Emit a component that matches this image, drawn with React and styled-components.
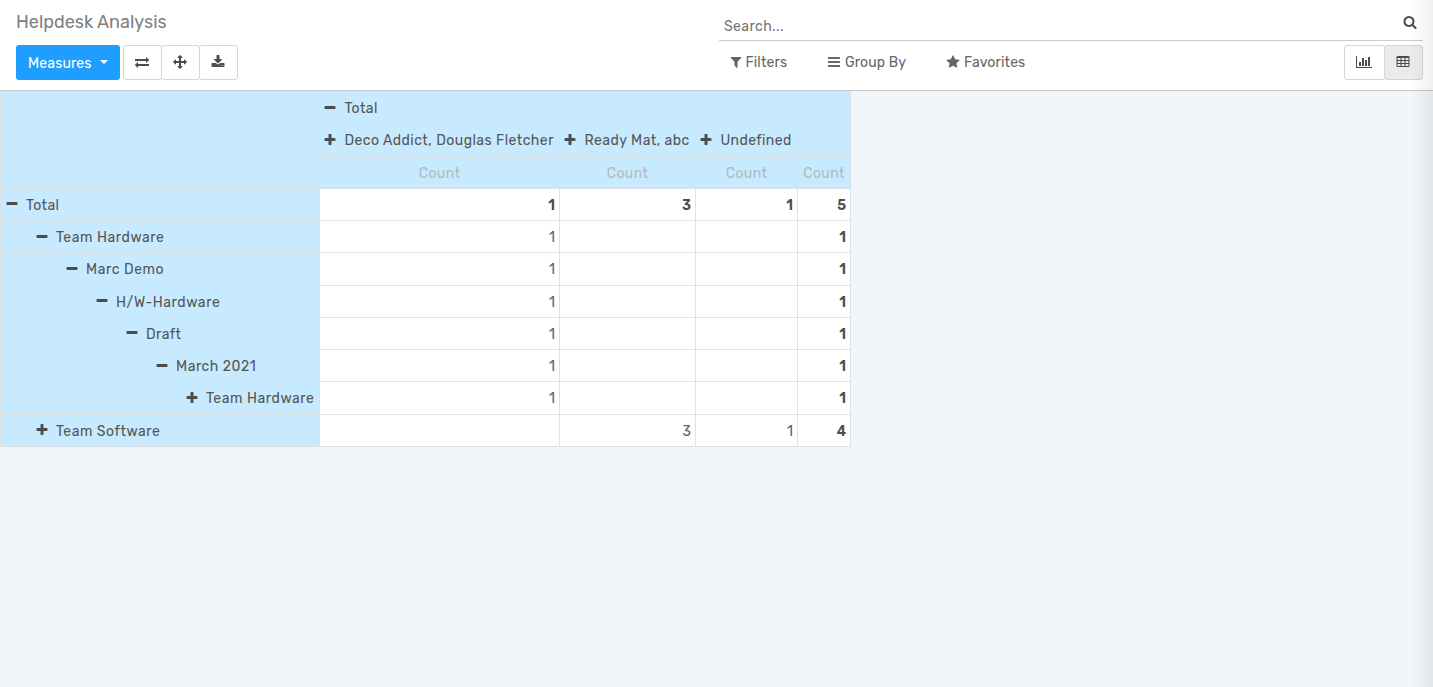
import React from "react";
import styled, { createGlobalStyle, css } from "styled-components";

const Global = createGlobalStyle`
  *, *::before, *::after { box-sizing: border-box; }
  body {
    margin: 0;
    height: 687px;
    overflow: hidden;
    background: #f1f6fb;
    color: #4c4c4c;
    font: 400 14px/21px Rubik, Roboto, "Noto Sans", sans-serif;
  }
`;

const icons = {
  exchange: "M1792 1184v192q0 13-9.5 22.5t-22.5 9.5h-1376v192q0 13-9.5 22.5t-22.5 9.5q-12 0-24-10l-319-320q-9-9-9-22 0-14 9-23l320-320q9-9 23-9 13 0 22.5 9.5t9.5 22.5v192h1376q13 0 22.5 9.5t9.5 22.5zm0-544q0 14-9 23l-320 320q-9 9-23 9-13 0-22.5-9.5t-9.5-22.5v-192h-1376q-13 0-22.5-9.5t-9.5-22.5v-192q0-13 9.5-22.5t22.5-9.5h1376v-192q0-14 9-23t23-9q12 0 24 10l319 319q9 9 9 23z",
  arrows: "M1792 896q0 26-19 45l-256 256q-19 19-45 19t-45-19-19-45v-128h-384v384h128q26 0 45 19t19 45-19 45l-256 256q-19 19-45 19t-45-19l-256-256q-19-19-19-45t19-45 45-19h128v-384h-384v128q0 26-19 45t-45 19-45-19l-256-256q-19-19-19-45t19-45l256-256q19-19 45-19t45 19 19 45v128h384v-384h-128q-26 0-45-19t-19-45 19-45l256-256q19-19 45-19t45 19l256 256q19 19 19 45t-19 45-45 19h-128v384h384v-128q0-26 19-45t45-19 45 19l256 256q19 19 19 45z",
  download: "M1344 1344q0-26-19-45t-45-19-45 19-19 45 19 45 45 19 45-19 19-45zm256 0q0-26-19-45t-45-19-45 19-19 45 19 45 45 19 45-19 19-45zm128-224v320q0 40-28 68t-68 28h-1472q-40 0-68-28t-28-68v-320q0-40 28-68t68-28h465l135 136q58 56 136 56t136-56l136-136h464q40 0 68 28t28 68zm-325-569q17 41-14 70l-448 448q-18 19-45 19t-45-19l-448-448q-31-29-14-70 17-39 59-39h256v-448q0-26 19-45t45-19h256q26 0 45 19t19 45v448h256q42 0 59 39z",
  filter: "M1595 295q17 41-14 70l-493 493v742q0 42-39 59-13 5-25 5-27 0-45-19l-256-256q-19-19-19-45v-486l-493-493q-31-29-14-70 17-39 59-39h1280q42 0 59 39z",
  bars: "M1664 1344v128q0 26-19 45t-45 19h-1408q-26 0-45-19t-19-45v-128q0-26 19-45t45-19h1408q26 0 45 19t19 45zm0-512v128q0 26-19 45t-45 19h-1408q-26 0-45-19t-19-45v-128q0-26 19-45t45-19h1408q26 0 45 19t19 45zm0-512v128q0 26-19 45t-45 19h-1408q-26 0-45-19t-19-45v-128q0-26 19-45t45-19h1408q26 0 45 19t19 45z",
  star: "M1728 647q0 22-26 48l-363 354 86 500q1 7 1 20 0 21-10.5 35.5t-30.5 14.5q-19 0-40-12l-449-236-449 236q-22 12-40 12-21 0-31.5-14.5t-10.5-35.5q0-6 2-20l86-500-364-354q-25-27-25-48 0-37 56-46l502-73 225-455q19-41 49-41t49 41l225 455 502 73q56 9 56 46z",
  search: "M1216 832q0-185-131.5-316.5t-316.5-131.5-316.5 131.5-131.5 316.5 131.5 316.5 316.5 131.5 316.5-131.5 131.5-316.5zm512 832q0 52-38 90t-90 38q-54 0-90-38l-343-342q-179 124-399 124-143 0-273.5-55.5t-225-150-150-225-55.5-273.5 55.5-273.5 150-225 225-150 273.5-55.5 273.5 55.5 225 150 150 225 55.5 273.5q0 220-124 399l343 343q37 37 37 90z",
  chart: "M640 896v512h-256v-512h256zm384-512v1024h-256v-1024h256zm1024 1152v128h-2048v-1536h128v1408h1920zm-640-896v768h-256v-768h256zm384-384v1152h-256v-1152h256z",
  table: "M224 128h1344q66 0 113 47t47 113v1088q0 66-47 113t-113 47h-1344q-66 0-113-47t-47-113v-1088q0-66 47-113t113-47zM192 416v192q0 32 32 32h320q32 0 32-32v-192q0-32-32-32h-320q-32 0-32 32zM704 416v192q0 32 32 32h320q32 0 32-32v-192q0-32-32-32h-320q-32 0-32 32zM1216 416v192q0 32 32 32h320q32 0 32-32v-192q0-32-32-32h-320q-32 0-32 32zM192 800v192q0 32 32 32h320q32 0 32-32v-192q0-32-32-32h-320q-32 0-32 32zM704 800v192q0 32 32 32h320q32 0 32-32v-192q0-32-32-32h-320q-32 0-32 32zM1216 800v192q0 32 32 32h320q32 0 32-32v-192q0-32-32-32h-320q-32 0-32 32zM192 1184v192q0 32 32 32h320q32 0 32-32v-192q0-32-32-32h-320q-32 0-32 32zM704 1184v192q0 32 32 32h320q32 0 32-32v-192q0-32-32-32h-320q-32 0-32 32zM1216 1184v192q0 32 32 32h320q32 0 32-32v-192q0-32-32-32h-320q-32 0-32 32z",
  plus: "M1600 736v192q0 40-28 68t-68 28h-416v416q0 40-28 68t-68 28h-192q-40 0-68-28t-28-68v-416h-416q-40 0-68-28t-28-68v-192q0-40 28-68t68-28h416v-416q0-40 28-68t68-28h192q40 0 68 28t28 68v416h416q40 0 68 28t28 68z",
  minus: "M1600 736v192q0 40-28 68t-68 28h-1216q-40 0-68-28t-28-68v-192q0-40 28-68t68-28h1216q40 0 68 28t28 68z",
};

const Svg = styled.svg`
  display: block;
  flex: none;
  fill: currentColor;
  fill-rule: evenodd;
`;

function Icon({ name, size = 14 }) {
  const wide = name === "chart" ? 2048 : 1792;
  return (
    <Svg width={(size * wide) / 1792} height={size} viewBox={`0 0 ${wide} 1792`} aria-hidden="true">
      <path d={icons[name]} />
    </Svg>
  );
}

const Panel = styled.header`
  display: grid;
  grid-template-columns: 703px 704px;
  height: 91px;
  padding: 0 0 0 16px;
  background: #fff;
  border-bottom: 1px solid #c8c8c8;
`;

const Side = styled.div`
  display: flex;
  flex-direction: column;
`;

const Title = styled.h1`
  margin: 0;
  height: 45px;
  padding-top: 10px;
  font-size: 18px;
  font-weight: 400;
  line-height: 25px;
  color: #808080;
`;

const Toolbar = styled.div`
  display: flex;
  gap: 3px;
`;

const Primary = styled.button`
  display: flex;
  align-items: center;
  gap: 8px;
  width: 104px;
  height: 35px;
  padding: 1px 0 0 12px;
  border: 0;
  border-radius: 3px;
  background: #1f9eff;
  color: #fff;
  font: inherit;
  letter-spacing: 0.15px;

  &::after {
    content: "";
    margin-bottom: 3px;
    border: 4px solid transparent;
    border-top-color: #fff;
    border-bottom: 0;
  }
`;

const Group = styled.div`
  display: flex;
`;

const IconButton = styled.button`
  display: flex;
  align-items: center;
  justify-content: center;
  width: ${(p) => p.$w}px;
  height: 35px;
  padding: 0 1px 1px 0;
  border: 1px solid #d5d5d5;
  border-radius: 3px;
  background: ${(p) => (p.$active ? "#ebebeb" : "#fff")};
  color: #4c4c4c;

  & + & {
    margin-left: -1px;
  }
`;

const Search = styled.div`
  display: flex;
  justify-content: space-between;
  height: 41px;
  padding: 15px 6px 0 5px;
  border-bottom: 1px solid #ccc;
  color: #757575;
  letter-spacing: 0.4px;
`;

const SearchText = styled.span`
  padding-top: 1px;
`;

const SearchIcon = styled.span`
  color: #4c4c4c;
`;

const Options = styled.div`
  display: flex;
  justify-content: space-between;
  padding-top: 4px;
`;

const Menus = styled.div`
  display: flex;
  padding: 7px 0 0 10px;
`;

const Menu = styled.div`
  display: flex;
  align-items: center;
  gap: ${(p) => p.$gap}px;
  width: ${(p) => p.$w}px;
  height: 20px;
  color: #666;
  letter-spacing: 0.15px;
  white-space: nowrap;

  svg {
    margin-bottom: 1px;
  }
`;

const Pivot = styled.table`
  width: 851px;
  table-layout: fixed;
  border-collapse: collapse;
  background: #fff;
`;

const headCell = css`
  background: #c7eaff;
  font-weight: 400;
  text-align: left;
`;

const Cell = styled.td`
  height: 32.25px;
  padding: 2px 4px 0;
  border: 1px solid #dee2e6;
  text-align: right;
  color: ${(p) => (p.$bold ? "#4c4c4c" : "#606060")};
  font-weight: ${(p) => (p.$bold ? 600 : 400)};
`;

const Head = styled.th`
  ${headCell}
  height: 32.25px;
  padding: 2px 0 0 ${(p) => (p.$top ? 3.4 : 4 + (p.$depth || 0) * 30)}px;
  border: 1px solid #dadfe3;
`;

const Measure = styled(Head)`
  padding: 2px 0 0;
  color: #b0bac0;
  text-align: center;
  letter-spacing: 0.4px;
`;

const Toggle = styled.div`
  display: flex;
  align-items: center;
  gap: 7px;
  white-space: nowrap;
  letter-spacing: ${(p) => p.$ls}px;

  svg {
    margin-bottom: 2px;
  }
`;

const ToggleLabel = styled.span`
  color: #555;
`;

const EdgeShade = styled.div`
  position: fixed;
  top: 0;
  right: 0;
  width: 22px;
  height: 687px;
  background: linear-gradient(to right, transparent, rgba(0, 0, 0, 0.06));
  pointer-events: none;
`;

const columns = [
  ["Deco Addict, Douglas Fletcher", 0.46],
  ["Ready Mat, abc", 0.48],
  ["Undefined", 0.38],
];

const rows = [
  ["Total", 0, false, ["1", "3", "1", "5"], 0.4],
  ["Team Hardware", 1, false, ["1", "", "", "1"], 0.56],
  ["Marc Demo", 2, false, ["1", "", "", "1"], 0.56],
  ["H/W-Hardware", 3, false, ["1", "", "", "1"], 0.58],
  ["Draft", 4, false, ["1", "", "", "1"], 0.4],
  ["March 2021", 5, false, ["1", "", "", "1"], 0.52],
  ["Team Hardware", 6, true, ["1", "", "", "1"], 0.56],
  ["Team Software", 1, true, ["", "3", "1", "4"], 0.52],
];

function Expander({ label, closed, ls = 0.4 }) {
  return (
    <Toggle $ls={ls}>
      <Icon name={closed ? "plus" : "minus"} />
      <ToggleLabel>{label}</ToggleLabel>
    </Toggle>
  );
}

export default function App() {
  return (
    <>
      <Global />
      <Panel>
        <Side>
          <Title>Helpdesk Analysis</Title>
          <Toolbar>
            <Primary>Measures</Primary>
            <Group>
              <IconButton $w={39}><Icon name="exchange" /></IconButton>
              <IconButton $w={39}><Icon name="arrows" /></IconButton>
              <IconButton $w={39}><Icon name="download" /></IconButton>
            </Group>
          </Toolbar>
        </Side>
        <Side>
          <Search>
            <SearchText>Search...</SearchText>
            <SearchIcon><Icon name="search" /></SearchIcon>
          </Search>
          <Options>
            <Menus>
              <Menu $w={98} $gap={2.5}><Icon name="filter" />Filters</Menu>
              <Menu $w={119} $gap={4}><Icon name="bars" />Group By</Menu>
              <Menu $w={90} $gap={4}><Icon name="star" />Favorites</Menu>
            </Menus>
            <Group>
              <IconButton $w={41}><Icon name="chart" /></IconButton>
              <IconButton $w={39} $active><Icon name="table" /></IconButton>
            </Group>
          </Options>
        </Side>
      </Panel>
      <Pivot>
        <colgroup>
          <col style={{ width: 319 }} />
          <col style={{ width: 240 }} />
          <col style={{ width: 136 }} />
          <col style={{ width: 102 }} />
          <col style={{ width: 53 }} />
        </colgroup>
        <thead>
          <tr>
            <Head rowSpan={3} />
            <Head $top colSpan={3}><Expander label="Total" /></Head>
            <Head rowSpan={2} />
          </tr>
          <tr>
            {columns.map(([label, ls]) => (
              <Head $top key={label}><Expander label={label} closed ls={ls} /></Head>
            ))}
          </tr>
          <tr>
            {[0, 1, 2, 3].map((i) => <Measure key={i}>Count</Measure>)}
          </tr>
        </thead>
        <tbody>
          {rows.map(([label, depth, closed, values, ls], r) => (
            <tr key={r}>
              <Head $depth={depth}><Expander label={label} closed={closed} ls={ls} /></Head>
              {values.map((v, i) => (
                <Cell key={i} $bold={r === 0 || i === 3}>{v}</Cell>
              ))}
            </tr>
          ))}
        </tbody>
      </Pivot>
      <EdgeShade />
    </>
  );
}
